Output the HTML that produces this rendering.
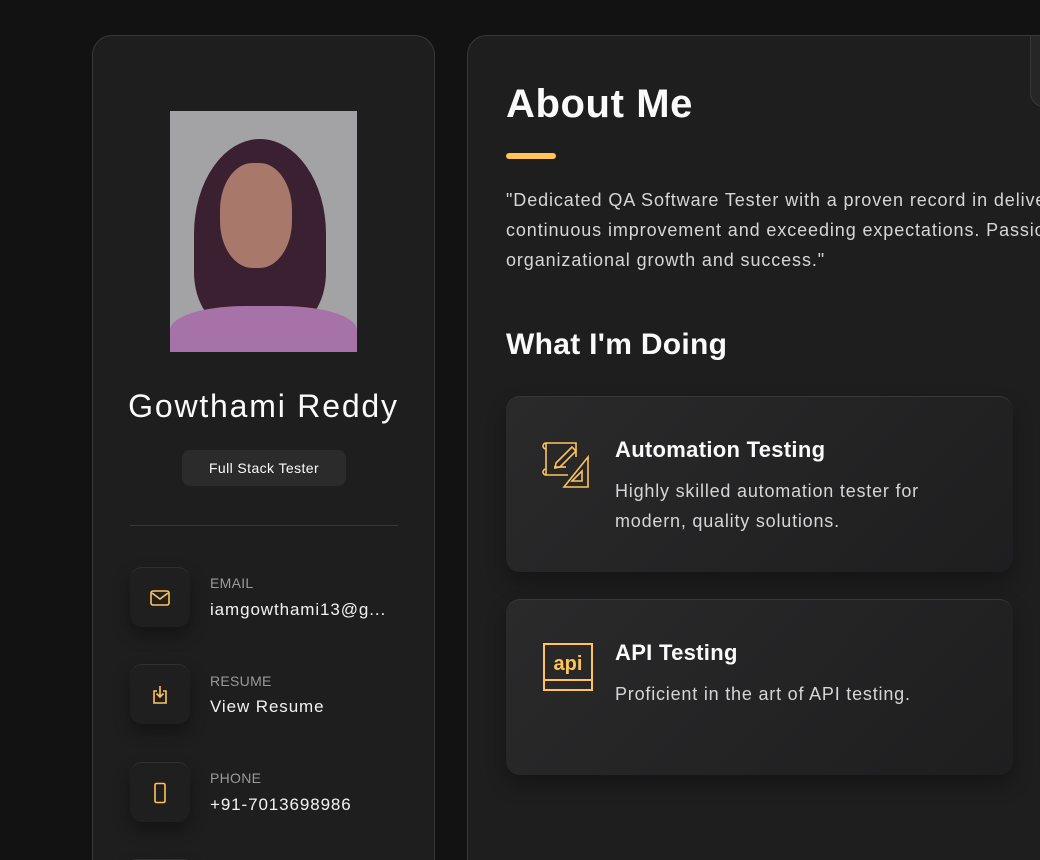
<!DOCTYPE html>
<html><head><meta charset="utf-8"><style>
*{box-sizing:border-box;margin:0;padding:0}
html,body{width:1040px;height:860px;overflow:hidden}
body{background:#121212;font-family:"Liberation Sans",sans-serif;color:#fafafa;position:relative}
.side{position:absolute;left:92px;top:35px;width:343px;height:825px;background:#1e1e1f;border:1px solid #383838;border-bottom:none;border-radius:20px 20px 0 0;overflow:hidden}
.main{position:absolute;left:467px;top:35px;width:573px;height:825px;background:#1e1e1f;border:1px solid #383838;border-bottom:none;border-right:none;border-radius:20px 0 0 0;overflow:hidden}
.photo{position:absolute;left:77px;top:75px;width:187px;height:241px;background:#a3a2a4;overflow:hidden}
.name{position:absolute;left:0;width:341px;top:352px;text-align:center;font-size:32px;font-weight:500;letter-spacing:1.8px;white-space:nowrap}
.badge{position:absolute;left:89px;top:414px;width:164px;height:36px;background:#2b2b2c;border-radius:8px;font-size:14px;text-align:center;line-height:36px;letter-spacing:.4px}
.sep{position:absolute;left:37px;top:489px;width:268px;height:1px;background:#383838}
.ci{position:absolute;left:37px;width:60px;height:60px;border-radius:12px;background:#1f1f20;box-shadow:0 8px 16px rgba(0,0,0,.35);border-top:1px solid #303030}
.ci svg{position:absolute;left:18px;top:18px}
.lbl{position:absolute;left:117px;font-size:14px;color:#9a9a9a;letter-spacing:.3px}
.val{position:absolute;left:117px;font-size:17px;color:#f2f2f2;letter-spacing:.9px}
h1{position:absolute;left:38px;top:46px;font-size:40px;font-weight:700;letter-spacing:.6px}
.bar{position:absolute;left:38px;top:117px;width:50px;height:6px;border-radius:3px;background:#ffc35a}
.p{position:absolute;left:38px;top:149px;width:800px;font-size:18px;line-height:30px;color:#d6d6d6;white-space:nowrap;letter-spacing:.9px}
h2{position:absolute;left:38px;top:292px;font-size:30px;font-weight:700;letter-spacing:.3px}
.card{position:absolute;left:38px;width:507px;height:176px;border-radius:14px;background:linear-gradient(135deg,#2a2a2b,#1e1e1f);border-top:1px solid #383838;box-shadow:0 10px 20px rgba(0,0,0,.3)}
.card h3{position:absolute;left:109px;top:40px;font-size:22px;font-weight:700;letter-spacing:.3px}
.card p{position:absolute;left:109px;top:79px;font-size:18px;line-height:30px;color:#d6d6d6;width:345px;letter-spacing:.8px}
.card svg{position:absolute;left:36px;top:42px}
</style></head><body>
<div class="side">
 <div class="photo">
  <div style="position:absolute;left:24px;top:28px;width:132px;height:190px;background:#3a2030;border-radius:50% 50% 30% 30%"></div>
  <div style="position:absolute;left:50px;top:52px;width:72px;height:105px;background:#a8796a;border-radius:45%"></div>
  <div style="position:absolute;left:0;top:195px;width:187px;height:60px;background:#a672a8;border-radius:40% 40% 0 0"></div>
 </div>
 <div class="name">Gowthami Reddy</div>
 <div class="badge">Full Stack Tester</div>
 <div class="sep"></div>
 <div class="ci" style="top:531px"><svg width="24" height="24" viewBox="0 0 24 24" fill="none" stroke="#ffc35a" stroke-width="1.6"><rect x="3" y="5" width="18" height="14" rx="2"/><path d="M4 7l8 6 8-6"/></svg></div>
 <div class="lbl" style="top:539px">EMAIL</div><div class="val" style="top:564px">iamgowthami13@g...</div>
 <div class="ci" style="top:628px"><svg width="24" height="24" viewBox="0 0 24 24" fill="none" stroke="#ffc35a" stroke-width="1.6"><path d="M9 8H6v12h12V8h-3"/><path d="M12 3v11M8.5 10.5L12 14l3.5-3.5"/></svg></div>
 <div class="lbl" style="top:637px">RESUME</div><div class="val" style="top:661px">View Resume</div>
 <div class="ci" style="top:726px"><svg width="24" height="24" viewBox="0 0 24 24" fill="none" stroke="#ffc35a" stroke-width="1.6"><rect x="7" y="2.5" width="10" height="19" rx="1.5"/></svg></div>
 <div class="lbl" style="top:734px">PHONE</div><div class="val" style="top:759px">+91-7013698986</div>
 <div class="ci" style="top:823px;height:10px"></div>
</div>
<div class="main">
 <div style="position:absolute;right:-20px;top:-1px;width:30px;height:72px;border:1px solid #383838;border-radius:0 0 0 14px;background:#262627"></div>
 <h1>About Me</h1>
 <div class="bar"></div>
 <div class="p">"Dedicated QA Software Tester with a proven record in delivering<br>continuous improvement and exceeding expectations. Passionate<br>organizational growth and success."</div>
 <h2>What I'm Doing</h2>
 <div class="card" style="top:360px">
  <svg width="50" height="50" viewBox="0 0 50 50" fill="none" stroke="#ffc35a" stroke-width="1.6"><path d="M4 4h30v14M4 4v32h22M4 4a3 3 0 0 0 0 6M4 36a3 3 0 0 1 0-6" /><path d="M14 24l16-16 4 4-16 16-5 1z"/><path d="M12 28h12"/><path d="M46 18v30H22z"/><path d="M40 32v10h-10z"/></svg>
  <h3>Automation Testing</h3>
  <p>Highly skilled automation tester for modern, quality solutions.</p>
 </div>
 <div class="card" style="top:563px">
  <svg width="52" height="52" viewBox="0 0 52 52" fill="none" stroke="#ffc35a" stroke-width="2"><rect x="2" y="2" width="48" height="36"/><rect x="2" y="38" width="48" height="10"/><text x="26" y="28" text-anchor="middle" fill="#ffc35a" stroke="none" font-family="Liberation Sans" font-weight="700" font-size="20">api</text></svg>
  <h3>API Testing</h3>
  <p>Proficient in the art of API testing.</p>
 </div>
</div>
</body></html>
